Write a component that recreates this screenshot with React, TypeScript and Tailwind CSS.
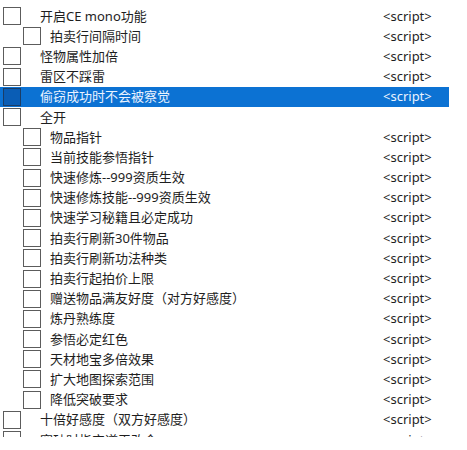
import React from 'react';

type Row = { label: string; nested?: boolean; script?: boolean };

const rows: Row[] = [
  { label: '开启CE mono功能', script: true },
  { label: '拍卖行间隔时间', nested: true, script: true },
  { label: '怪物属性加倍', script: true },
  { label: '雷区不踩雷', script: true },
  { label: '偷窃成功时不会被察觉', script: true },
  { label: '全开' },
  { label: '物品指针', nested: true, script: true },
  { label: '当前技能参悟指针', nested: true, script: true },
  { label: '快速修炼--999资质生效', nested: true, script: true },
  { label: '快速修炼技能--999资质生效', nested: true, script: true },
  { label: '快速学习秘籍且必定成功', nested: true, script: true },
  { label: '拍卖行刷新30件物品', nested: true, script: true },
  { label: '拍卖行刷新功法种类', nested: true, script: true },
  { label: '拍卖行起拍价上限', nested: true, script: true },
  { label: '赠送物品满友好度（对方好感度）', nested: true, script: true },
  { label: '炼丹熟练度', nested: true, script: true },
  { label: '参悟必定红色', nested: true, script: true },
  { label: '天材地宝多倍效果', nested: true, script: true },
  { label: '扩大地图探索范围', nested: true, script: true },
  { label: '降低突破要求', nested: true, script: true },
  { label: '十倍好感度（双方好感度）', script: true },
  { label: '突破时指定道王改命', script: true },
];

const SELECTED = 4;

export default function App() {
  return (
    <div
      className="w-[467px] h-[450px] bg-white overflow-hidden"
      style={{ fontFamily: '"Noto Sans", "Noto Sans CJK SC", sans-serif' }}
    >
      <div className="w-[449px] h-[437px] overflow-hidden pt-[6px]">
        {rows.map((r, i) => {
          const sel = i === SELECTED;
          return (
            <div
              key={i}
              className={`flex items-center h-[20.2px] text-[13px] leading-none ${
                sel ? 'bg-[#0c72d3] text-[#eaf3ff]' : 'text-[#1e1e1e]'
              }`}
            >
              <div className={`flex items-center shrink-0 ${r.nested ? 'w-[383px]' : 'w-[383px]'}`}>
                <span
                  className={`shrink-0 w-[18px] h-[18px] border ${
                    r.nested ? 'ml-[23px]' : 'ml-[3px]'
                  } ${sel ? 'bg-[#0a5db5] border-[#1b3d66]' : 'bg-white border-[#5c5c5c]'}`}
                />
                <span className={`whitespace-nowrap ${r.nested ? 'ml-[9px]' : 'ml-[19px]'}`}>
                  {r.label}
                </span>
              </div>
              {r.script && <span className="whitespace-nowrap">&lt;script&gt;</span>}
            </div>
          );
        })}
      </div>
    </div>
  );
}
